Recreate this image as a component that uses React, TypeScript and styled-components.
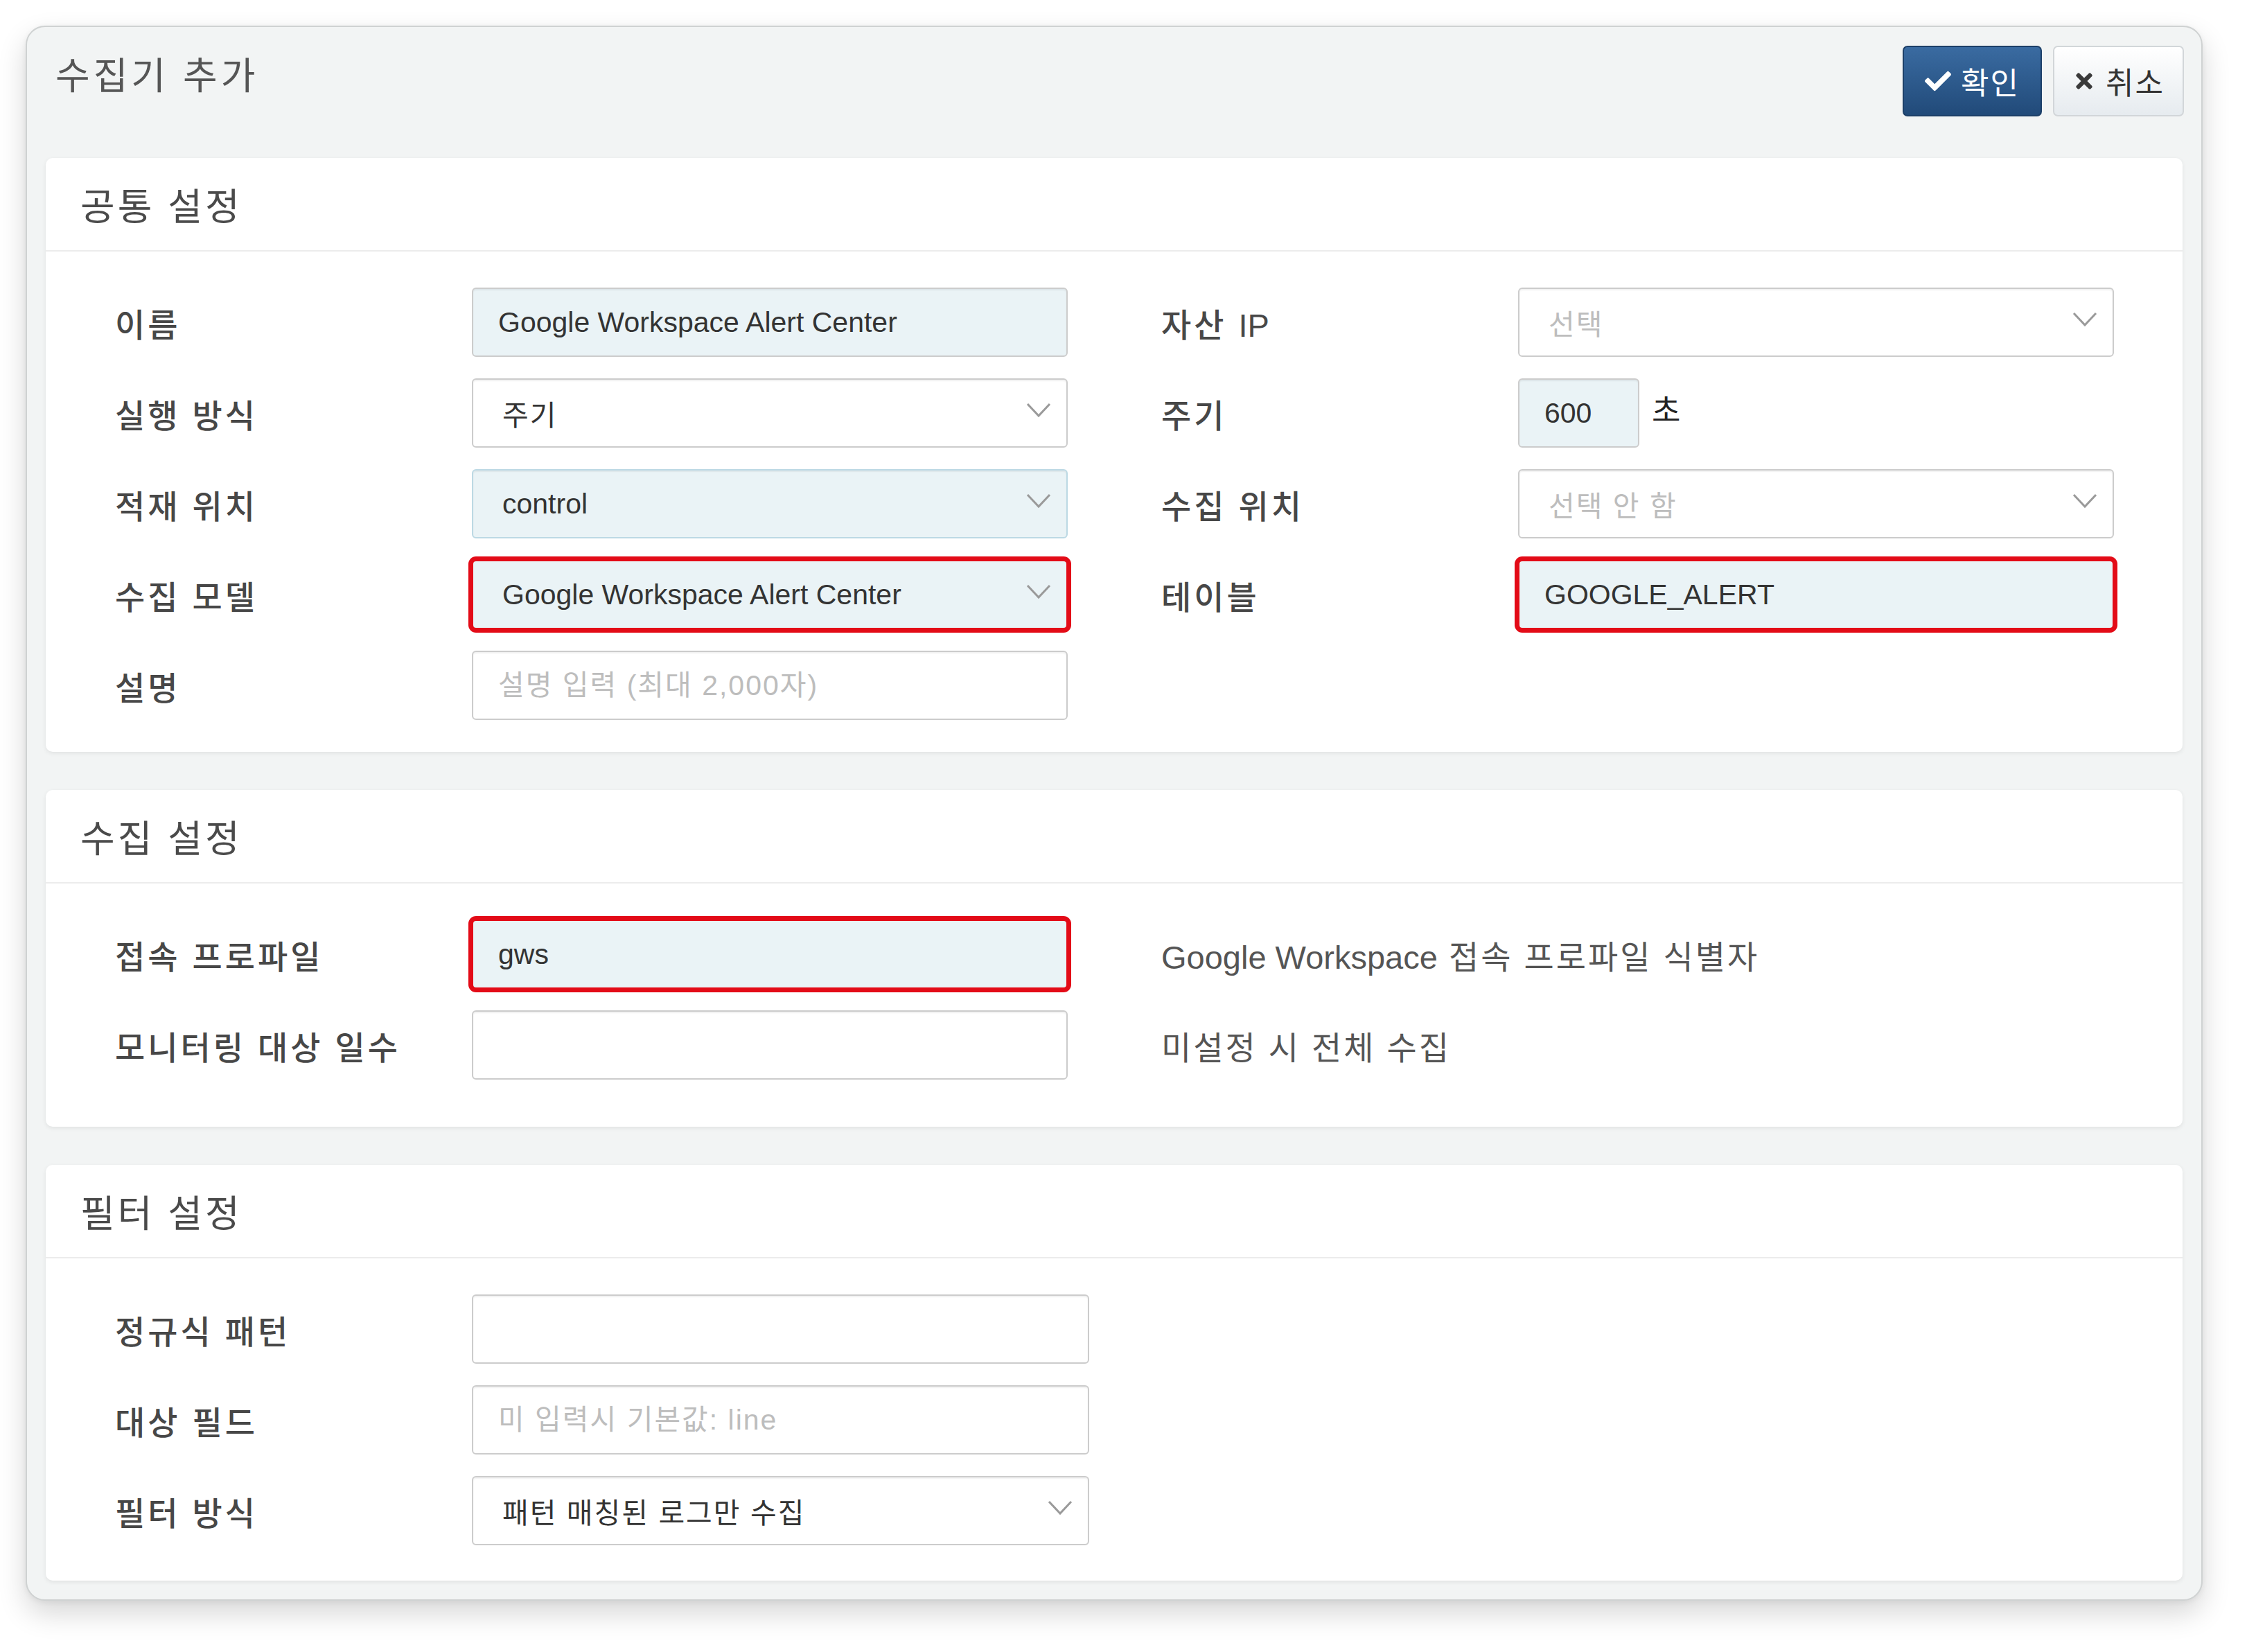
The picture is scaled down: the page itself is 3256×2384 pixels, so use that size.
import React from 'react';
import styled, { createGlobalStyle, css } from 'styled-components';
import { FaCheck, FaTimes } from 'react-icons/fa';

const GlobalStyle = createGlobalStyle`
  body {
    margin: 0;
    background: #ffffff;
    font-family: "Liberation Sans", "Noto Sans CJK KR", sans-serif;
  }
  * {
    box-sizing: border-box;
  }
`;

const Page = styled.div`
  padding: 37px 0 0 37px;
  width: 3256px;
  height: 2384px;
`;

const Panel = styled.div`
  width: 3142px;
  background: #f2f4f4;
  border: 2px solid #cfd2d2;
  border-radius: 28px;
  padding: 27px 27px 27px;
  box-shadow: 0 18px 40px rgba(0, 0, 0, 0.16), 0 2px 8px rgba(0, 0, 0, 0.06);
`;

const PanelHeader = styled.div`
  display: flex;
  justify-content: space-between;
  align-items: flex-start;
  margin-bottom: 60px;
`;

const Title = styled.h1`
  margin: 10px 0 0 14px;
  font-size: 54px;
  line-height: 68px;
  font-weight: 400;
  letter-spacing: 5px;
  color: #555555;
`;

const ButtonGroup = styled.div`
  display: flex;
  gap: 16px;
  margin-right: -2px;
`;

const Button = styled.button<{ $primary?: boolean }>`
  height: 102px;
  padding: 0;
  display: flex;
  align-items: center;
  justify-content: center;
  gap: 14px;
  white-space: nowrap;
  border-radius: 7px;
  font-family: inherit;
  font-size: 44px;
  letter-spacing: 2px;
  cursor: pointer;
  ${(p) =>
    p.$primary
      ? css`
          width: 201px;
          color: #ffffff;
          background: linear-gradient(#3a6ba1, #214a79);
          border: 2px solid #1c3f68;
        `
      : css`
          width: 189px;
          color: #333333;
          background: linear-gradient(#ffffff, #e6ebef);
          border: 2px solid #d2d6d9;
        `}
`;

const Card = styled.section`
  background: #ffffff;
  border-radius: 10px;
  box-shadow: 0 2px 6px rgba(0, 0, 0, 0.08);
  & + & {
    margin-top: 55px;
  }
`;

const CardHeader = styled.div`
  height: 135px;
  display: flex;
  align-items: center;
  padding-left: 50px;
  border-bottom: 2px solid #ececec;
  font-size: 54px;
  letter-spacing: 4px;
  color: #4a4a4a;
`;

const CardBody = styled.div<{ $bottom: number }>`
  display: grid;
  row-gap: 31px;
  padding: 52px 0 ${(p) => p.$bottom}px 100px;
`;

const Row = styled.div`
  display: grid;
  grid-template-columns: 1375px 1375px;
  column-gap: 135px;
  align-items: center;
`;

const Field = styled.div`
  display: flex;
  align-items: center;
`;

const Label = styled.div`
  width: 515px;
  flex: none;
  font-size: 47px;
  font-weight: 500;
  letter-spacing: 4px;
  color: #474747;
`;

// latin words inside korean text keep their natural spacing
const Latin = styled.span`
  letter-spacing: 0;
`;

type CtlProps = { $width: number; $filled?: boolean; $mark?: boolean; $tint?: boolean; $ko?: boolean };

const controlBase = css<CtlProps>`
  width: ${(p) => p.$width}px;
  height: 100px;
  flex: none;
  border: 2px solid ${(p) => (p.$tint ? '#bcd9e4' : '#cccccc')};
  border-radius: 6px;
  background: ${(p) => (p.$filled ? '#eaf3f6' : '#ffffff')};
  box-shadow: inset 0 2px 2px rgba(0, 0, 0, 0.06);
  font-family: inherit;
  font-size: 41px;
  letter-spacing: ${(p) => (p.$ko ? '2px' : '0')};
  color: #333333;
  ${(p) =>
    p.$mark &&
    css`
      border-color: #e30b17;
      box-shadow: 0 0 0 5px #e30b17;
    `}
`;

const TextInput = styled.input<CtlProps>`
  ${controlBase};
  padding: 0 36px;
  outline: none;
  &::placeholder {
    color: #bdbdbd;
  }
`;

const SelectBox = styled.div<CtlProps>`
  ${controlBase};
  display: flex;
  align-items: center;
  justify-content: space-between;
  padding: 0 22px 0 42px;
`;

const SelectText = styled.span<{ $placeholder?: boolean }>`
  color: ${(p) => (p.$placeholder ? '#bdbdbd' : '#333333')};
`;

const Unit = styled.span`
  margin-left: 18px;
  margin-bottom: 14px;
  font-size: 45px;
  color: #222222;
`;

const Hint = styled.div`
  font-size: 47px;
  color: #555555;
  letter-spacing: 3px;
`;

const Chevron = () => (
  <svg width="36" height="22" viewBox="0 0 36 22" style={{ marginBottom: 8 }}>
    <polyline points="2,2 18,19 34,2" fill="none" stroke="#9a9a9a" strokeWidth="3" />
  </svg>
);

type Ctl = { width?: number; filled?: boolean; mark?: boolean; tint?: boolean; ko?: boolean };

const Select = ({ value, placeholder, width = 860, filled, mark, tint, ko }: Ctl & { value?: string; placeholder?: string }) => (
  <SelectBox $width={width} $filled={filled} $mark={mark} $tint={tint} $ko={ko}>
    <SelectText $placeholder={!value}>{value || placeholder}</SelectText>
    <Chevron />
  </SelectBox>
);

const Input = ({ value, placeholder, width = 860, filled, mark, ko }: Ctl & { value?: string; placeholder?: string }) => (
  <TextInput
    $width={width}
    $filled={filled}
    $mark={mark}
    $ko={ko}
    readOnly
    value={value ?? ''}
    placeholder={placeholder}
  />
);

export default function App() {
  return (
    <Page>
      <GlobalStyle />
      <Panel>
        <PanelHeader>
          <Title>수집기 추가</Title>
          <ButtonGroup>
            <Button $primary>
              <FaCheck size={38} />
              확인
            </Button>
            <Button>
              <FaTimes size={34} color="#3a3a3a" />
              취소
            </Button>
          </ButtonGroup>
        </PanelHeader>

        <Card>
          <CardHeader>공통 설정</CardHeader>
          <CardBody $bottom={46}>
            <Row>
              <Field>
                <Label>이름</Label>
                <Input value="Google Workspace Alert Center" filled />
              </Field>
              <Field>
                <Label>
                  자산 <Latin>IP</Latin>
                </Label>
                <Select placeholder="선택" ko />
              </Field>
            </Row>
            <Row>
              <Field>
                <Label>실행 방식</Label>
                <Select value="주기" ko />
              </Field>
              <Field>
                <Label>주기</Label>
                <Input value="600" width={175} filled />
                <Unit>초</Unit>
              </Field>
            </Row>
            <Row>
              <Field>
                <Label>적재 위치</Label>
                <Select value="control" filled tint />
              </Field>
              <Field>
                <Label>수집 위치</Label>
                <Select placeholder="선택 안 함" ko />
              </Field>
            </Row>
            <Row>
              <Field>
                <Label>수집 모델</Label>
                <Select value="Google Workspace Alert Center" filled mark />
              </Field>
              <Field>
                <Label>테이블</Label>
                <Input value="GOOGLE_ALERT" filled mark />
              </Field>
            </Row>
            <Row>
              <Field>
                <Label>설명</Label>
                <Input placeholder="설명 입력 (최대 2,000자)" ko />
              </Field>
            </Row>
          </CardBody>
        </Card>

        <Card>
          <CardHeader>수집 설정</CardHeader>
          <CardBody $bottom={68}>
            <Row>
              <Field>
                <Label>접속 프로파일</Label>
                <Input value="gws" filled mark />
              </Field>
              <Hint>
                <Latin>Google Workspace</Latin> 접속 프로파일 식별자
              </Hint>
            </Row>
            <Row>
              <Field>
                <Label>모니터링 대상 일수</Label>
                <Input />
              </Field>
              <Hint>미설정 시 전체 수집</Hint>
            </Row>
          </CardBody>
        </Card>

        <Card>
          <CardHeader>필터 설정</CardHeader>
          <CardBody $bottom={51}>
            <Row>
              <Field>
                <Label>정규식 패턴</Label>
                <Input width={891} />
              </Field>
            </Row>
            <Row>
              <Field>
                <Label>대상 필드</Label>
                <Input width={891} placeholder="미 입력시 기본값: line" ko />
              </Field>
            </Row>
            <Row>
              <Field>
                <Label>필터 방식</Label>
                <Select width={891} value="패턴 매칭된 로그만 수집" ko />
              </Field>
            </Row>
          </CardBody>
        </Card>
      </Panel>
    </Page>
  );
}
